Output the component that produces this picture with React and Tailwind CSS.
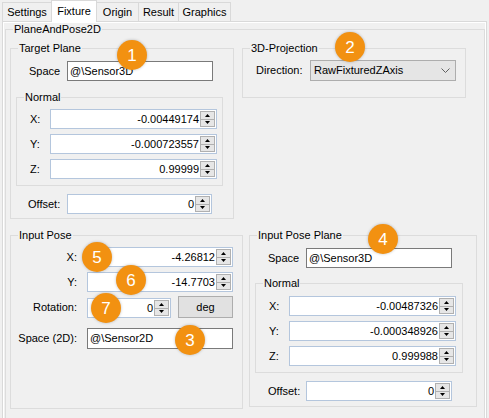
import React from 'react';

// little spin arrows for the numeric boxes
const Arrow = ({ up }) => (
  <svg width="5" height="3" viewBox="0 0 5 3">
    <path d={up ? 'M0 3H5L2.5 0Z' : 'M0 0H5L2.5 3Z'} fill="#000" />
  </svg>
);

const GroupBox = ({ title, className, children }) => (
  <fieldset className={`border border-[#dcdcdc] ${className}`}>
    <legend className="ml-[7px] px-[1px] leading-[13px]">{title}</legend>
    {children}
  </fieldset>
);

const SpinBox = ({ value, className }) => (
  <div className={`flex bg-white border border-[#b4c6dd] ${className}`}>
    <div className="flex-1 flex items-center justify-end pr-[1px]">{value}</div>
    <div className="w-[15px] my-[1px] mr-[1px] flex flex-col border border-[#b0b0b0] bg-[#e6e6e6]">
      <div className="flex-1 flex items-center justify-center border-b border-[#b0b0b0]">
        <Arrow up />
      </div>
      <div className="flex-1 flex items-center justify-center">
        <Arrow />
      </div>
    </div>
  </div>
);

const TextBox = ({ value, className }) => (
  <div className={`flex items-center bg-white border border-[#7a7a7a] pl-[2px] ${className}`}>{value}</div>
);

const Badge = ({ n, className }) => (
  <div
    className={`absolute w-[30px] h-[30px] rounded-full bg-[#f29111] text-white text-[17px] leading-none flex items-center justify-center shadow-[0_0_3px_rgba(0,0,0,0.25)] ${className}`}
  >
    {n}
  </div>
);

export default function App() {
  return (
    <div className="relative w-[489px] h-[418px] overflow-hidden bg-[#f0f0f0] text-black text-[11px] leading-[13px] font-['Liberation_Sans',Arial,sans-serif]">
      {/* tab strip */}
      <div className="h-[21px] pl-[2px] flex items-end">
        <div className="w-[49px] h-[19px] border-l border-t border-[#d9d9d9] flex items-center justify-center">Settings</div>
        <div className="relative z-10 w-[46px] h-[22px] -mb-[1px] bg-white border-l border-t border-r border-[#d9d9d9] flex items-center justify-center pb-[1px]">Fixture</div>
        <div className="w-[41px] h-[19px] border-t border-[#d9d9d9] flex items-center justify-center">Origin</div>
        <div className="w-[40px] h-[19px] border-l border-t border-[#d9d9d9] flex items-center justify-center">Result</div>
        <div className="w-[53px] h-[19px] border-l border-t border-r border-[#d9d9d9] flex items-center justify-center">Graphics</div>
      </div>

      {/* tab page */}
      <div className="ml-[2px] w-[485px] border border-[#d9d9d9]">
        <div className="border border-white h-[420px]">
          <GroupBox title="PlaneAndPose2D" className="ml-[1px] w-[480px] pb-[20px]">
            {/* top row */}
            <div className="mt-[6px] flex items-start">
              <GroupBox title="Target Plane" className="ml-[4px] w-[224px] pb-[4px]">
                <div className="mt-[6px] pl-[18px] flex items-center">
                  <span className="w-[38px]">Space</span>
                  <TextBox value={'@\\Sensor3D'} className="w-[146px] h-[20px]" />
                </div>
                <GroupBox title="Normal" className="mt-[10px] ml-[5px] w-[207px] pb-[6px]">
                  <div className="mt-[5px] pl-[13px] flex items-center">
                    <span className="w-[20px]">X:</span>
                    <SpinBox value="-0.00449174" className="w-[167px] h-[20px]" />
                  </div>
                  <div className="mt-[5px] pl-[13px] flex items-center">
                    <span className="w-[20px]">Y:</span>
                    <SpinBox value="-0.000723557" className="w-[167px] h-[20px]" />
                  </div>
                  <div className="mt-[5px] pl-[13px] flex items-center">
                    <span className="w-[20px]">Z:</span>
                    <SpinBox value="0.99999" className="w-[167px] h-[20px]" />
                  </div>
                </GroupBox>
                <div className="mt-[8px] pl-[17px] flex items-center">
                  <span className="w-[39px]">Offset:</span>
                  <SpinBox value="0" className="w-[145px] h-[20px]" />
                </div>
              </GroupBox>

              <GroupBox title="3D-Projection" className="ml-[8px] w-[224px] pb-[16px]">
                <div className="mt-[5px] pl-[13px] flex items-center">
                  <span className="w-[54px]">Direction:</span>
                  <div className="w-[146px] h-[21px] flex items-center justify-between bg-[#e5e5e5] border border-[#adadad] pl-[3px] pr-[5px]">
                    <span>RawFixturedZAxis</span>
                    <svg width="9" height="5" viewBox="0 0 9 5">
                      <path d="M0.5 0.5L4.5 4.5L8.5 0.5" fill="none" stroke="#606060" strokeWidth="1" />
                    </svg>
                  </div>
                </div>
              </GroupBox>
            </div>

            {/* bottom row */}
            <div className="mt-[10px] flex items-start">
              <GroupBox title="Input Pose" className="ml-[4px] w-[233px] pb-[59px]">
                <div className="mt-[5px] flex items-center">
                  <span className="w-[76px] pr-[10px] text-right">X:</span>
                  <SpinBox value="-4.26812" className="w-[146px] h-[20px]" />
                </div>
                <div className="mt-[5px] flex items-center">
                  <span className="w-[76px] pr-[10px] text-right">Y:</span>
                  <SpinBox value="-14.7703" className="w-[146px] h-[20px]" />
                </div>
                <div className="mt-[4px] flex items-end">
                  <span className="w-[76px] pr-[10px] text-right self-center">Rotation:</span>
                  <SpinBox value="0" className="w-[84px] h-[20px]" />
                  <div className="ml-[7px] w-[55px] h-[22px] flex items-center justify-center bg-[#e1e1e1] border border-[#adadad]">deg</div>
                </div>
                <div className="mt-[10px] flex items-center">
                  <span className="w-[76px] pr-[10px] text-right">Space (2D):</span>
                  <TextBox value={'@\\Sensor2D'} className="w-[146px] h-[21px]" />
                </div>
              </GroupBox>

              <GroupBox title="Input Pose Plane" className="ml-[6px] w-[228px] pb-[5px]">
                <div className="mt-[6px] pl-[18px] flex items-center">
                  <span className="w-[38px]">Space</span>
                  <TextBox value={'@\\Sensor3D'} className="w-[146px] h-[20px]" />
                </div>
                <GroupBox title="Normal" className="mt-[9px] ml-[5px] w-[208px] pb-[6px]">
                  <div className="mt-[6px] pl-[13px] flex items-center">
                    <span className="w-[20px]">X:</span>
                    <SpinBox value="-0.00487326" className="w-[167px] h-[20px]" />
                  </div>
                  <div className="mt-[5px] pl-[13px] flex items-center">
                    <span className="w-[20px]">Y:</span>
                    <SpinBox value="-0.000348926" className="w-[167px] h-[20px]" />
                  </div>
                  <div className="mt-[5px] pl-[13px] flex items-center">
                    <span className="w-[20px]">Z:</span>
                    <SpinBox value="0.999988" className="w-[167px] h-[20px]" />
                  </div>
                </GroupBox>
                <div className="mt-[8px] pl-[18px] flex items-center">
                  <span className="w-[38px]">Offset:</span>
                  <SpinBox value="0" className="w-[146px] h-[20px]" />
                </div>
              </GroupBox>
            </div>
          </GroupBox>
        </div>
      </div>

      {/* numbered callouts */}
      <Badge n="1" className="left-[117px] top-[40px]" />
      <Badge n="2" className="left-[335px] top-[32px]" />
      <Badge n="4" className="left-[368px] top-[224px]" />
      <Badge n="5" className="left-[82px] top-[242px]" />
      <Badge n="6" className="left-[116px] top-[265px]" />
      <Badge n="7" className="left-[91px] top-[293px]" />
      <Badge n="3" className="left-[175px] top-[325px]" />
    </div>
  );
}
